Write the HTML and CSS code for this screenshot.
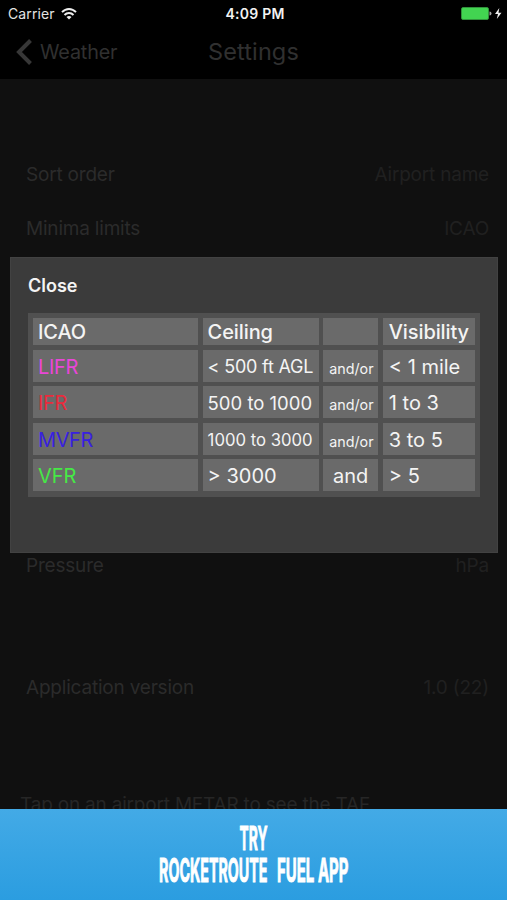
FILE: index.html
```html
<!DOCTYPE html>
<html lang="en">
<head>
<meta charset="utf-8">
<title>Settings</title>
<link rel="stylesheet" href="styles.css">
</head>
<body>
<div class="screen">
  <header class="top">
    <div class="status">
      <div class="carrier"><span>Carrier</span>
        <svg width="16" height="12" viewBox="0 0 16 12" fill="none" stroke="#eee" stroke-width="1.9"><path d="M1 4.2C5-.1 11-.1 15 4.2M3.500 7C6 4.300 10 4.300 12.500 7"/><path d="M8 11.600 5.500 9Q8 6.900 10.500 9Z" fill="#eee" stroke="none"/></svg>
      </div>
      <span class="time">4:09 PM</span>
      <svg class="battery" width="41" height="13" viewBox="0 0 41 13"><rect x=".5" y=".5" width="27" height="12" rx="1.500" fill="#42d451" stroke="#369d40" stroke-width=".8"/><path d="M28.500 4.500q2 0 2 2t-2 2z" fill="#aaa"/><path d="M38.300 1 34 7h3l-1.200 5L40.500 5.800h-3z" fill="#eee"/></svg>
    </div>
    <nav class="nav">
      <div class="back"><svg width="16" height="26" viewBox="0 0 16 26" fill="none" stroke="#373737" stroke-width="4"><path d="M14.500 1.500 3 13l11.500 11.500"/></svg><span>Weather</span></div>
      <h1>Settings</h1>
    </nav>
  </header>
  <main class="list">
    <div class="row"><span>Sort order</span><span class="value">Airport name</span></div>
    <div class="row"><span>Minima limits</span><span class="value">ICAO</span></div>
    <div class="row pressure"><span>Pressure</span><span class="value">hPa</span></div>
    <div class="row version"><span>Application version</span><span class="value">1.0 (22)</span></div>
    <p class="hint">Tap on an airport METAR to see the TAF</p>
  </main>
  <section class="dialog">
    <div class="close">Close</div>
    <div class="grid">
      <div class="head">ICAO</div><div class="head">Ceiling</div><div class="head"></div><div class="head vis">Visibility</div>
      <div class="lifr">LIFR</div><div class="agl">&lt; 500 ft AGL</div><div class="small">and/or</div><div class="vis">&lt; 1 mile</div>
      <div class="ifr">IFR</div><div class="mid">500 to 1000</div><div class="small">and/or</div><div class="vis">1 to 3</div>
      <div class="mvfr">MVFR</div><div class="low">1000 to 3000</div><div class="small">and/or</div><div class="vis">3 to 5</div>
      <div class="vfr">VFR</div><div>&gt; 3000</div><div class="and">and</div><div class="vis">&gt; 5</div>
    </div>
  </section>
  <footer class="banner">
    <svg width="507" height="91" viewBox="0 0 507 91">
      <text x="239.500" y="41" textLength="28" lengthAdjust="spacingAndGlyphs">TRY</text>
      <text x="159" y="73" textLength="108.500" lengthAdjust="spacingAndGlyphs">ROCKETROUTE</text>
      <text x="277" y="73" textLength="71.500" lengthAdjust="spacingAndGlyphs">FUEL APP</text>
    </svg>
  </footer>
</div>
</body>
</html>
```
FILE: styles.css
```css
* { box-sizing: border-box; }
body { margin: 0; background: #101010; font-family: Inter, "Liberation Sans", sans-serif; }
.screen { position: relative; width: 507px; height: 900px; overflow: hidden; display: flex; flex-direction: column; background: #101010; }
.top { height: 79px; background: #000; flex: none; }
.status { height: 27px; display: grid; grid-template-columns: 1fr auto 1fr; align-items: center; padding: 0 5px 0 8px; font-size: 14px; color: #e4e4e4; }
.carrier { display: flex; align-items: center; gap: 6px; letter-spacing: .1px; }
.time { font-weight: 600; font-size: 14px; color: #f2f2f2; letter-spacing: .25px; }
.battery { justify-self: end; }
.nav { height: 50px; display: grid; grid-template-columns: 1fr auto 1fr; align-items: center; padding: 0 16px; color: #303030; }
.back { display: flex; align-items: center; gap: 8px; font-size: 19.800px; letter-spacing: -.15px; }
h1 { margin: -2px 0 0; font-size: 23.500px; font-weight: 400; letter-spacing: .1px; }
.list { flex: 1; min-height: 0; overflow: hidden; padding-top: 68px; color: #2b2b2b; font-size: 19px; letter-spacing: -.2px; }
.row { height: 54px; display: flex; align-items: center; justify-content: space-between; padding: 0 18px 0 26px; }
.value { color: #202020; }
.pressure { margin-top: 283px; }
.version { margin-top: 68px; }
.hint { margin: 80px 0 0 20px; line-height: 22px; color: #262626; white-space: nowrap; }
.dialog { position: absolute; left: 10px; top: 257px; width: 488px; height: 296px; background: #3b3b3b; border: 1px solid #424242; padding: 16px 17px; }
.close { height: 23px; margin-bottom: 16px; font-size: 18px; line-height: 23px; font-weight: 600; color: #f4f4f4; }
.grid { width: 452px; height: 184px; padding: 5px; display: grid; grid-template-columns: 165px 116px 55px 92px; grid-template-rows: 27px 32px 32px 32px 32px; gap: 4.600px; background: #505050; }
.grid > div { background: #6a6a6a; color: #f4f4f4; display: flex; align-items: center; padding: 2px 0 0 5px; font-size: 20px; white-space: nowrap; }
.grid > .head { font-weight: 500; letter-spacing: -.1px; padding-top: 1px; }
.grid > .vis { padding-left: 6px; }
.grid > .lifr { color: #e946d8; letter-spacing: -.3px; }
.grid > .ifr { color: #e92b3c; letter-spacing: -.3px; }
.grid > .mvfr { color: #3821df; letter-spacing: -.4px; }
.grid > .vfr { color: #46e846; }
.grid > .agl { font-size: 18px; letter-spacing: -.2px; }
.grid > .mid { font-size: 18.500px; }
.grid > .low { font-size: 16.700px; padding-top: 3px; }
.grid > .small { font-size: 14.300px; padding: 5px 0 0 6px; }
.grid > .and { padding-left: 0; justify-content: center; }
.banner { height: 91px; flex: none; background: linear-gradient(#43aae6, #2b9de0); }
.banner svg { display: block; }
.banner text { font: 700 32.500px Inter, sans-serif; fill: #fff; stroke: #fff; stroke-width: 1px; }
```
